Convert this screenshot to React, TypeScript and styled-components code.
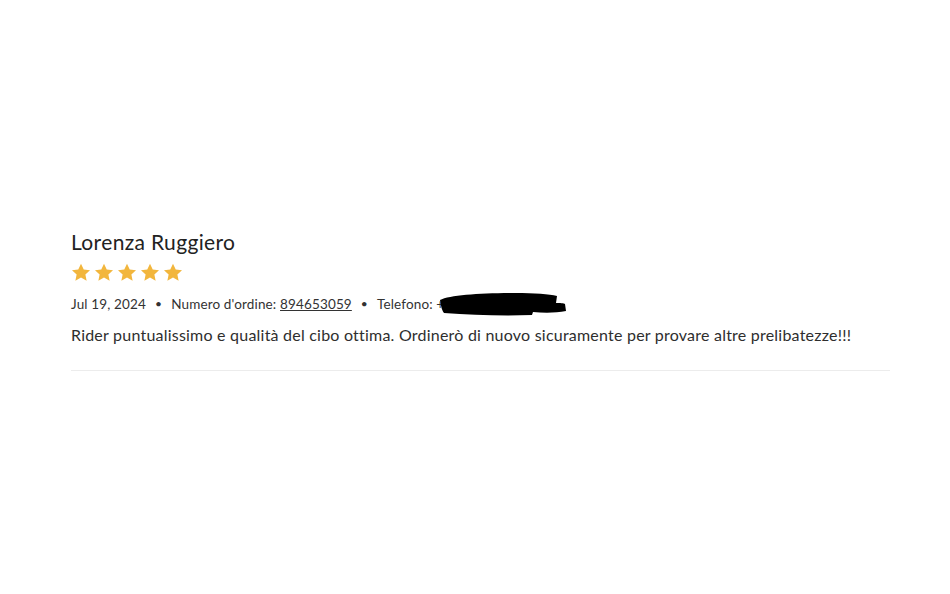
import React from "react";
import styled, { createGlobalStyle } from "styled-components";

const GlobalStyle = createGlobalStyle`
  body {
    margin: 0;
    background: #ffffff;
    font-family: Lato, "Noto Sans", sans-serif;
    color: #2b2b2b;
  }
`;

type Review = {
  author: string;
  rating: number;
  date: string;
  orderNumber: string;
  text: string;
};

const review: Review = {
  author: "Lorenza Ruggiero",
  rating: 5,
  date: "Jul 19, 2024",
  orderNumber: "894653059",
  text: "Rider puntualissimo e qualità del cibo ottima. Ordinerò di nuovo sicuramente per provare altre prelibatezze!!!",
};

const Star: React.FC = () => (
  <svg width="20" height="19" viewBox="0 0 24 23">
    <path
      d="M12 0.8l3.3 7 7.6 0.9-5.6 5.2 1.5 7.6L12 17.7l-6.8 3.8 1.5-7.6L1.1 8.7l7.6-0.9z"
      fill="#f2b63d"
    />
  </svg>
);

const Redaction: React.FC = () => (
  <svg width="130" height="24" viewBox="0 0 130 24">
    <path
      d="M3 8c10-5 40-7 75-7 20 0 34 1 42 3l-1 7c4 0 8 0 9 1l1 7c-10 2-22 2-33 1l-1 3c-30 1-60 0-88-2 -3-4-3-9-4-13z"
      fill="#000"
    />
  </svg>
);

export default function App() {
  return (
    <>
      <GlobalStyle />
      <Page>
        <Card>
          <Author>{review.author}</Author>
          <Stars>
            {Array.from({ length: review.rating }).map((_, i) => (
              <Star key={i} />
            ))}
          </Stars>
          <Meta>
            <span>{review.date}</span>
            <Dot>•</Dot>
            <span>
              Numero d'ordine: <OrderLink>{review.orderNumber}</OrderLink>
            </span>
            <Dot>•</Dot>
            <span>Telefono: +</span>
            <Hidden>
              <Redaction />
            </Hidden>
          </Meta>
          <Body>{review.text}</Body>
        </Card>
      </Page>
    </>
  );
}

const Page = styled.div`
  padding: 229px 60px 0 71px;
`;

const Card = styled.div`
  display: flex;
  flex-direction: column;
  border-bottom: 1px solid #ececec;
  padding-bottom: 23px;
`;

const Author = styled.h2`
  margin: 0;
  font-size: 21px;
  font-weight: 400;
  line-height: 26px;
  letter-spacing: 0.35px;
  color: #222;
`;

const Stars = styled.div`
  display: flex;
  gap: 3px;
  margin-top: 8px;
`;

const Meta = styled.div`
  display: flex;
  align-items: center;
  margin-top: 10px;
  font-size: 13.5px;
  letter-spacing: 0.15px;
  line-height: 20px;
  color: #333;
`;

const Dot = styled.span`
  margin: 0 9px;
  font-size: 12px;
`;

const OrderLink = styled.a`
  color: #333;
  text-decoration: underline;
`;

const Hidden = styled.span`
  display: inline-flex;
  margin-left: -7px;
`;

const Body = styled.p`
  margin: 7px 0 0;
  font-size: 16px;
  line-height: 24px;
  letter-spacing: 0.22px;
  color: #2e2e2e;
`;
